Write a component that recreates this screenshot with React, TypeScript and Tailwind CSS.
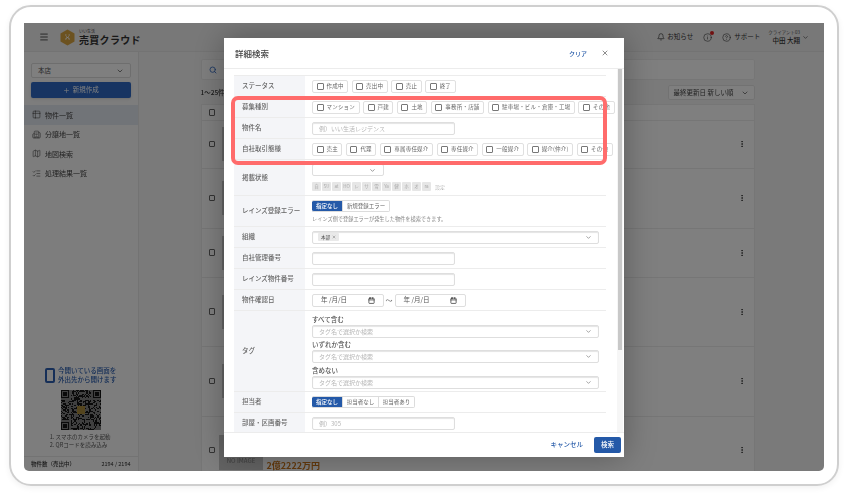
import { Bell, ChevronDown, CircleHelp, Info, Map, Menu, Plus, Search, Table2, Building2, ListChecks, X, MoreVertical, Calendar } from "lucide-react";

const statusOptions = ["作成中", "売出中", "売止", "終了"];
const typeOptions = ["マンション", "戸建", "土地", "事務所・店舗", "駐車場・ビル・倉庫・工場", "その他"];
const dealOptions = ["売主", "代理", "専属専任媒介", "専任媒介", "一般媒介", "媒介(仲介)", "その他"];
const portals = ["自", "SU", "at", "HO", "レ", "サ", "雪", "Ya", "健", "ホ", "オ", "ra"];

const rowHeights = ["h-[48px]", "h-[60px]", "h-[49px]", "h-[69px]", "h-[70px]"];

function Chip({ label }: { label: string }) {
  return (
    <div className="flex h-[13px] shrink-0 items-center gap-[3px] rounded-[2px] border border-[#e0e0e0] bg-white px-[3.5px] text-[5.5px] tracking-[0.2px] text-[#666]">
      <span className="h-[7px] w-[7px] shrink-0 rounded-[1px] border border-[#777]" />
      <span>{label}</span>
    </div>
  );
}

function Row({ label, height = "h-[21px]", children }: { label: string; height?: string; children: React.ReactNode }) {
  return (
    <div className={`flex ${height} border-b border-[#ececec]`}>
      <div className="flex w-[71px] shrink-0 items-center bg-[#f4f5f8] pl-[8px] text-[6.5px] font-medium text-[#666]">
        {label}
      </div>
      <div className="flex min-w-0 flex-1 flex-col justify-center pl-[7px]">{children}</div>
    </div>
  );
}

function TextBox({ width, placeholder }: { width: string; placeholder?: string }) {
  return (
    <div className={`flex h-[13px] ${width} items-center rounded-[2px] border border-[#dedede] pl-[6px] text-[6px] text-[#b5b5b5] shadow-[inset_0_1px_1px_#e4e4e4]`}>
      {placeholder}
    </div>
  );
}

function TagSelect({ placeholder }: { placeholder: string }) {
  return (
    <div className="flex h-[13px] w-[287px] items-center justify-between rounded-[2px] border border-[#dedede] px-[6px] text-[6px] text-[#b5b5b5] shadow-[inset_0_1px_1px_#e4e4e4]">
      <span>{placeholder}</span>
      <ChevronDown size={7} className="text-[#666]" />
    </div>
  );
}

function DateBox() {
  return (
    <div className="flex h-[13px] w-[71.5px] items-center justify-between rounded-[2px] border border-[#dedede] px-[8px] text-[6.5px] text-[#555]">
      <span>年 /月/日</span>
      <Calendar size={7} strokeWidth={2.5} className="text-[#333]" />
    </div>
  );
}

function Segments({ items }: { items: { label: string; width: string }[] }) {
  return (
    <div className="flex h-[12.5px]">
      {items.map((item, i) => (
        <div
          key={item.label}
          className={`flex items-center justify-center border border-l-0 border-[#dcdcdc] text-[5.5px] ${item.width} ${
            i === 0 ? "rounded-l-[2px] border-[#2459a8] bg-[#2459a8] font-medium text-white" : "text-[#666]"
          } ${i === items.length - 1 ? "rounded-r-[2px]" : ""}`}
        >
          {item.label}
        </div>
      ))}
    </div>
  );
}

function QrCode() {
  const size = 33;
  const cells: { x: number; y: number }[] = [];
  let seed = 17;
  const inFinder = (x: number, y: number) =>
    (x < 8 && y < 8) || (x >= size - 8 && y < 8) || (x < 8 && y >= size - 8);
  for (let y = 0; y < size; y++) {
    for (let x = 0; x < size; x++) {
      seed = (seed * 1103515245 + 12345) & 0x7fffffff;
      if (!inFinder(x, y) && seed % 100 > 52) cells.push({ x, y });
    }
  }
  const finders = [
    [0, 0],
    [size - 7, 0],
    [0, size - 7],
  ];
  return (
    <svg width="40" height="40" viewBox="0 0 33 33" shapeRendering="crispEdges">
      <rect width="33" height="33" fill="#808080" />
      {cells.map((c) => (
        <rect key={`${c.x}-${c.y}`} x={c.x} y={c.y} width="1" height="1" fill="#141414" />
      ))}
      {finders.map(([x, y]) => (
        <g key={`${x}-${y}`}>
          <rect x={x} y={y} width="7" height="7" fill="#141414" />
          <rect x={x + 1} y={y + 1} width="5" height="5" fill="#808080" />
          <rect x={x + 2} y={y + 2} width="3" height="3" fill="#141414" />
        </g>
      ))}
      <rect x="13" y="13" width="7" height="7" rx="1.5" fill="#a98a3c" />
    </svg>
  );
}

function Sidebar() {
  return (
    <aside className="flex w-[114.5px] shrink-0 flex-col border-r border-[#e6e6e6] bg-[#fafafa]">
      <div className="px-[7px] pt-[11px]">
        <div className="flex h-[15px] items-center justify-between rounded-[2px] border border-[#ddd] bg-white px-[6px] text-[6.5px] text-[#555]">
          <span>本店</span>
          <ChevronDown size={8} className="text-[#444]" />
        </div>
        <div className="mt-[4px] flex h-[16px] items-center justify-center gap-[3px] rounded-[2px] bg-[#2f69c4] text-[6.5px] text-white shadow-sm">
          <Plus size={7} />
          <span>新規作成</span>
        </div>
      </div>
      <nav className="mt-[7px] text-[7px] text-[#444]">
        <div className="flex h-[19.5px] items-center gap-[4px] bg-[#e3e8f0] pl-[8px]">
          <Table2 size={9} strokeWidth={1.5} />
          <span>物件一覧</span>
        </div>
        <div className="flex h-[19.5px] items-center gap-[4px] pl-[8px]">
          <Building2 size={9} strokeWidth={1.5} />
          <span>分譲地一覧</span>
        </div>
        <div className="flex h-[19.5px] items-center gap-[4px] pl-[8px]">
          <Map size={9} strokeWidth={1.5} />
          <span>地図検索</span>
        </div>
        <div className="flex h-[19.5px] items-center gap-[4px] pl-[8px]">
          <ListChecks size={9} strokeWidth={1.5} />
          <span>処理結果一覧</span>
        </div>
      </nav>
      <div className="mt-auto flex flex-col items-center">
        <div className="flex items-center gap-[3px]">
          <div className="h-[15px] w-[10px] rounded-[2px] border-2 border-[#2c5fb0]" />
          <div className="text-[6.5px] font-medium leading-[9px] text-[#2c5fb0]">
            今開いている画面を
            <br />
            外出先から開けます
          </div>
        </div>
        <div className="mt-[6px]">
          <QrCode />
        </div>
        <div className="mt-[3px] w-[62px] text-[5.5px] leading-[8px] text-[#555]">
          1. スマホのカメラを起動
          <br />
          2. QRコードを読み込み
        </div>
      </div>
      <div className="mt-[7px] flex h-[15px] items-center justify-between border-t border-[#e6e6e6] px-[7px] text-[5.5px] text-[#333]">
        <span className="font-medium">物件数（売出中）</span>
        <span>2194 / 2194</span>
      </div>
    </aside>
  );
}

function ResultTable() {
  return (
    <div className="mt-[4px] border border-[#ececec] bg-white">
      <div className="flex h-[15.5px] items-center border-b border-[#ececec] pl-[7px]">
        <span className="h-[6.5px] w-[6.5px] rounded-[1px] border border-[#666]" />
      </div>
      {rowHeights.map((h) => (
        <div key={h} className={`flex ${h} items-center border-b border-[#ececec] pl-[7px] pr-[8px]`}>
          <span className="h-[6.5px] w-[6.5px] shrink-0 rounded-[1px] border border-[#666]" />
          <div className="ml-[6.5px] h-[34px] w-[44px] bg-[#c8c8c8]" />
          <MoreVertical size={8} strokeWidth={3} className="ml-auto text-[#444]" />
        </div>
      ))}
      <div className="flex h-[60px] items-start pl-[7px] pr-[8px] pt-[18px]">
        <span className="mt-[12px] h-[6.5px] w-[6.5px] shrink-0 rounded-[1px] border border-[#666]" />
        <div className="ml-[4px] flex h-[35px] w-[44px] items-end justify-center bg-[#c8c8c8] pb-[5px] text-[6px] font-medium text-[#888]">
          NO IMAGE
        </div>
        <div className="ml-[3.5px] pt-[25px] text-[9px] font-bold leading-[12px] text-[#c9741a]">2億2222万円</div>
        <MoreVertical size={8} strokeWidth={3} className="ml-auto mt-[11px] text-[#444]" />
      </div>
    </div>
  );
}

function Modal() {
  return (
    <div className="absolute left-[200px] top-[15px] flex h-[419px] w-[400px] flex-col bg-white shadow-[0_0_30px_rgba(0,0,0,0.3)]">
      <div className="flex h-[30px] shrink-0 items-center justify-between pl-[11px] pr-[15px]">
        <span className="text-[8.5px] font-medium text-[#444]">詳細検索</span>
        <div className="flex items-center gap-[14px]">
          <span className="text-[6px] font-medium text-[#2459a8]">クリア</span>
          <X size={8} className="text-[#555]" />
        </div>
      </div>
      <div className="relative min-h-0 flex-1 overflow-hidden border-y border-[#ececec]">
        <div className="absolute bottom-0 right-[1px] top-0 w-[6px] bg-[#f6f6f6]">
          <div className="ml-[1px] h-[281px] w-[4px] bg-[#c8c8c8]" />
        </div>
        <div className="ml-[10px] mt-[6px] w-[372px] border-t border-[#ececec]">
          <Row label="ステータス">
            <div className="flex gap-[3.5px]">
              {statusOptions.map((o) => (
                <Chip key={o} label={o} />
              ))}
            </div>
          </Row>
          <Row label="募集種別">
            <div className="flex gap-[3.5px]">
              {typeOptions.map((o) => (
                <Chip key={o} label={o} />
              ))}
            </div>
          </Row>
          <Row label="物件名">
            <TextBox width="w-[143px]" placeholder="例）いい生活レジデンス" />
          </Row>
          <Row label="自社取引態様">
            <div className="flex gap-[3.5px]">
              {dealOptions.map((o) => (
                <Chip key={o} label={o} />
              ))}
            </div>
          </Row>
          <Row label="掲載状態" height="h-[36px]">
            <div className="flex h-[12px] w-[71.5px] items-center justify-end rounded-[2px] border border-[#dedede] pr-[7px]">
              <ChevronDown size={7} className="text-[#555]" />
            </div>
            <div className="mt-[6px] flex items-center gap-[1px]">
              {portals.map((p) => (
                <span key={p} className="flex h-[9px] w-[9px] items-center justify-center rounded-[1px] bg-[#e6e6e6] text-[4.5px] text-[#aaa]">
                  {p}
                </span>
              ))}
              <span className="ml-[3px] text-[5px] text-[#bbb]">設定</span>
            </div>
          </Row>
          <Row label="レインズ登録エラー" height="h-[31px]">
            <Segments
              items={[
                { label: "指定なし", width: "w-[31px]" },
                { label: "新規登録エラー", width: "w-[47px]" },
              ]}
            />
            <div className="mt-[2.5px] text-[5.2px] leading-[8px] text-[#888]">レインズ側で登録エラーが発生した物件を検索できます。</div>
          </Row>
          <Row label="組織">
            <div className="flex h-[13px] w-[287px] items-center justify-between rounded-[2px] border border-[#dedede] pl-[5px] pr-[6px] shadow-[inset_0_1px_1px_#e4e4e4]">
              <span className="flex h-[8px] items-center gap-[2px] rounded-[1px] bg-[#e9e9e9] px-[3px] text-[4.5px] text-[#444]">
                本部 <X size={4} />
              </span>
              <ChevronDown size={7} className="text-[#666]" />
            </div>
          </Row>
          <Row label="自社管理番号">
            <TextBox width="w-[143px]" />
          </Row>
          <Row label="レインズ物件番号">
            <TextBox width="w-[143px]" />
          </Row>
          <Row label="物件確認日">
            <div className="flex items-center gap-[2px]">
              <DateBox />
              <span className="text-[7px] text-[#666]">〜</span>
              <DateBox />
            </div>
          </Row>
          <Row label="タグ" height="h-[81px]">
            <div className="text-[6.5px] font-medium leading-[11px] text-[#555]">すべて含む</div>
            <TagSelect placeholder="タグ名で選択か検索" />
            <div className="mt-[1.5px] text-[6.5px] font-medium leading-[11px] text-[#555]">いずれか含む</div>
            <TagSelect placeholder="タグ名で選択か検索" />
            <div className="mt-[1.5px] text-[6.5px] font-medium leading-[11px] text-[#555]">含めない</div>
            <TagSelect placeholder="タグ名で選択か検索" />
          </Row>
          <Row label="担当者">
            <Segments
              items={[
                { label: "指定なし", width: "w-[31px]" },
                { label: "担当者なし", width: "w-[36px]" },
                { label: "担当者あり", width: "w-[36px]" },
              ]}
            />
          </Row>
          <Row label="部屋・区画番号">
            <TextBox width="w-[143px]" placeholder="例）305" />
          </Row>
        </div>
        {/* red highlight around the three rows */}
        <div className="absolute left-[6.5px] top-[26.5px] h-[69.5px] w-[376.5px] rounded-[7px] border-[4.5px] border-[#ff6b6b]" />
      </div>
      <div className="flex h-[24px] shrink-0 items-center justify-end gap-[11px] pr-[3px]">
        <span className="text-[6.5px] font-medium text-[#2459a8]">キャンセル</span>
        <div className="flex h-[16px] w-[27px] items-center justify-center rounded-[2px] bg-[#2459a8] text-[6.5px] font-medium text-white">検索</div>
      </div>
    </div>
  );
}

export default function App() {
  return (
    <div className="h-[498px] w-[848px] overflow-hidden bg-white pl-[9px] pt-[5px] font-['Noto_Sans_CJK_JP','Noto_Sans',sans-serif]">
      <div className="h-[481px] w-[830px] rounded-[22px] border-2 border-[#cfcfcf] pl-[13px] pt-[16px] shadow-[0_2px_6px_rgba(0,0,0,0.06)]">
        <div className="relative flex h-[448px] w-[800px] flex-col overflow-hidden rounded-b-[5px] bg-[#f5f5f5] blur-[0.3px]">
          <header className="flex h-[29px] shrink-0 items-center border-b border-[#e6e6e6] bg-[#f0f0f0] pl-[15px] pr-[15px]">
            <Menu size={10} className="text-[#333]" />
            <svg width="15" height="17" viewBox="0 0 15 17" className="ml-[11px]">
              <path d="M7.5 0.5 14.5 4.5V12.5L7.5 16.5 0.5 12.5V4.5Z" fill="#d9a441" />
              <path d="M5 6h1.5M8.5 6H10M5 10h1.5M8.5 10H10M6 7.5l3 2M9 7.5l-3 2" stroke="#fff" strokeWidth="0.9" />
            </svg>
            <div className="ml-[4px] flex flex-col">
              <span className="text-[4px] leading-[5px] text-[#333]">いい生活</span>
              <span className="text-[10px] font-bold leading-[11px] tracking-[0.3px] text-[#333]">売買クラウド</span>
            </div>
            <div className="ml-auto flex items-center text-[6.5px] text-[#333]">
              <Bell size={8} />
              <span className="ml-[2px]">お知らせ</span>
              <div className="relative ml-[10px]">
                <Info size={9} strokeWidth={1.5} />
                <span className="absolute -right-[1.5px] -top-[1.5px] h-[4px] w-[4px] rounded-full bg-[#e02020]" />
              </div>
              <CircleHelp size={9} strokeWidth={1.5} className="ml-[10px]" />
              <span className="ml-[3px]">サポート</span>
              <div className="ml-[8px] flex flex-col items-end">
                <span className="text-[4.5px] leading-[7px] text-[#555]">クライアント03</span>
                <span className="text-[6.5px] font-medium leading-[9px]">中田 大翔</span>
              </div>
              <ChevronDown size={7} className="ml-[2px]" />
            </div>
          </header>
          <div className="flex min-h-0 flex-1">
            <Sidebar />
            <main className="min-w-0 flex-1 pl-[62px] pr-[69px] pt-[7px]">
              <div className="flex h-[21px] items-center rounded-[2px] border border-[#ececec] bg-white pl-[7px]">
                <Search size={8} strokeWidth={2.5} className="text-[#2f69c4]" />
              </div>
              <div className="mt-[5px] flex h-[15px] items-center justify-between">
                <span className="text-[6.5px] font-medium text-[#333]">1〜25件</span>
                <div className="flex h-[15px] w-[87.5px] items-center justify-between rounded-[2px] border border-[#e4e4e4] bg-white px-[5px] text-[6.5px] text-[#444]">
                  <span>最終更新日 新しい順</span>
                  <ChevronDown size={8} />
                </div>
              </div>
              <ResultTable />
            </main>
          </div>
          <div className="absolute inset-0 bg-black/50" />
          <Modal />
        </div>
      </div>
    </div>
  );
}
